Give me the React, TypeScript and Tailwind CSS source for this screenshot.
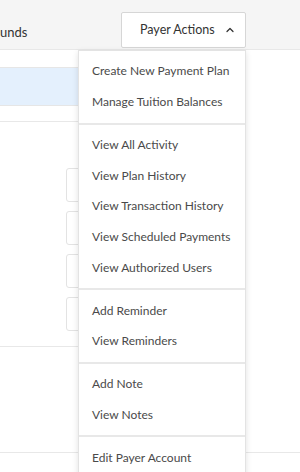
import { ChevronUp } from 'lucide-react'

const groups = [
  ['Create New Payment Plan', 'Manage Tuition Balances'],
  ['View All Activity', 'View Plan History', 'View Transaction History', 'View Scheduled Payments', 'View Authorized Users'],
  ['Add Reminder', 'View Reminders'],
  ['Add Note', 'View Notes'],
  ['Edit Payer Account'],
]

export default function App() {
  return (
    <div className="relative w-[300px] h-[472px] overflow-hidden bg-white text-[12px] text-[#3d3d3d]" style={{ fontFamily: 'Lato, "Liberation Sans", sans-serif' }}>
      {/* header with tabs and action button */}
      <div className="h-[50px] bg-[#f5f5f5] border-b border-[#e8e8e8] flex items-end justify-between pr-[54px] pb-[1px]">
        <span className="text-[13px] text-[#333] mb-[6px]">unds</span>
        <button className="w-[125px] h-[36px] bg-white border border-[#d6d6d6] rounded-[2px] flex items-center pl-[18px] gap-[9px] text-[12.5px] text-[#333]">
          Payer Actions
          <ChevronUp size={12} strokeWidth={2.5} />
        </button>
      </div>

      {/* page body behind the menu */}
      <div className="flex flex-col">
        <div className="w-[200px] flex flex-col">
          <div className="h-[17px]" />
          <div className="h-[39px] w-[78px] bg-[#e4f0fd] border-y border-[#e6e6e6]" />
          <div className="h-[16px] border-b border-[#e8e8e8]" />
          <div className="flex flex-col gap-[9px] pl-[66px] pt-[46px]">
            <div className="h-[34px] border border-[#e3e3e3] rounded-[3px]" />
            <div className="h-[34px] border border-[#e3e3e3] rounded-[3px]" />
            <div className="h-[34px] border border-[#e3e3e3] rounded-[3px]" />
            <div className="h-[34px] border border-[#e3e3e3] rounded-[3px]" />
          </div>
          <div className="h-[16px] border-b border-[#e8e8e8]" />
        </div>
        <div className="h-[106px] border-b border-[#e8e8e8]" />
      </div>

      {/* dropdown menu */}
      <div className="absolute left-[78px] top-[50px] w-[168px] bg-white border border-[#e3e3e3] shadow-[0_2px_6px_rgba(0,0,0,0.12)]">
        {groups.map((g, i) => (
          <div key={i} className={`py-[5px] ${i > 0 ? 'border-t-2 border-[#e8e8e8]' : ''}`}>
            {g.map((item) => (
              <div key={item} className="h-[30.75px] flex items-center px-[13px] text-[12px] text-[#4a4a4a] whitespace-nowrap">
                {item}
              </div>
            ))}
          </div>
        ))}
      </div>
    </div>
  )
}
